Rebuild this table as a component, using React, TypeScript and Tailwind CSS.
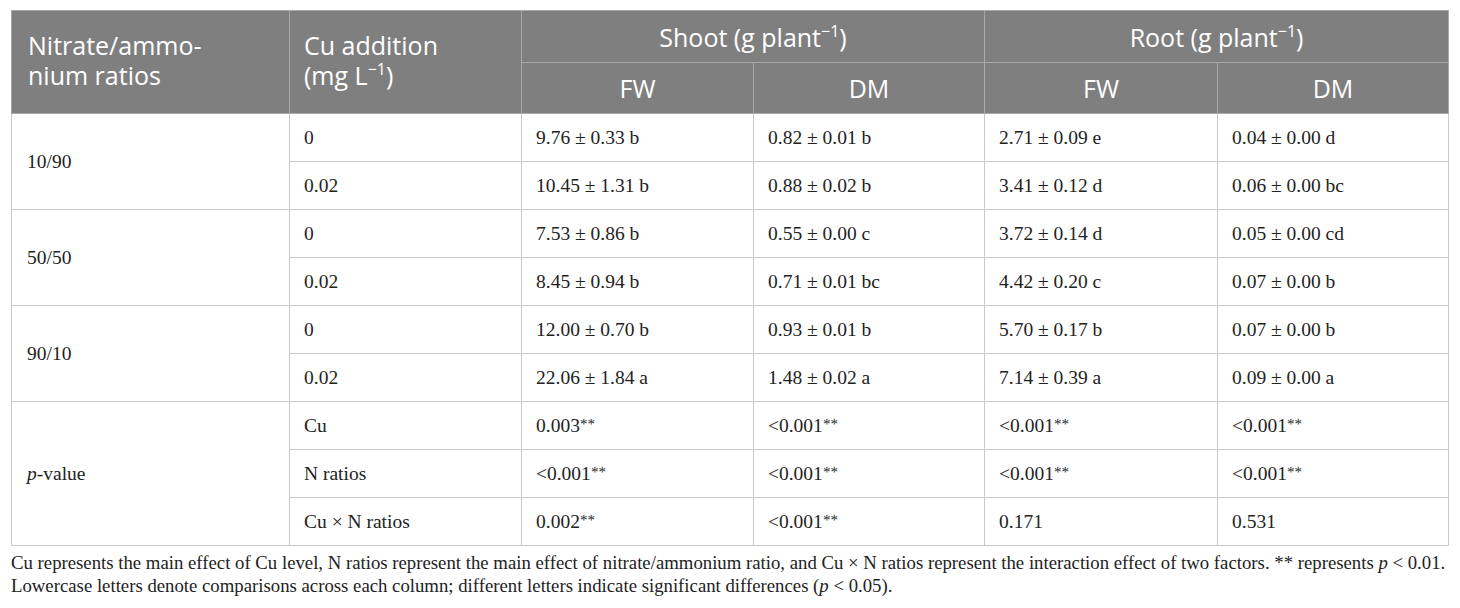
import React from "react";

const serif = "font-['Liberation_Serif','Times_New_Roman',serif]";
const sans = "font-['Open_Sans','Lato',sans-serif]";

type Row = { cu: string; sfw: string; sdm: string; rfw: string; rdm: string };
const groups: { label: React.ReactNode; rows: Row[] }[] = [
  {
    label: "10/90",
    rows: [
      { cu: "0", sfw: "9.76 ± 0.33 b", sdm: "0.82 ± 0.01 b", rfw: "2.71 ± 0.09 e", rdm: "0.04 ± 0.00 d" },
      { cu: "0.02", sfw: "10.45 ± 1.31 b", sdm: "0.88 ± 0.02 b", rfw: "3.41 ± 0.12 d", rdm: "0.06 ± 0.00 bc" },
    ],
  },
  {
    label: "50/50",
    rows: [
      { cu: "0", sfw: "7.53 ± 0.86 b", sdm: "0.55 ± 0.00 c", rfw: "3.72 ± 0.14 d", rdm: "0.05 ± 0.00 cd" },
      { cu: "0.02", sfw: "8.45 ± 0.94 b", sdm: "0.71 ± 0.01 bc", rfw: "4.42 ± 0.20 c", rdm: "0.07 ± 0.00 b" },
    ],
  },
  {
    label: "90/10",
    rows: [
      { cu: "0", sfw: "12.00 ± 0.70 b", sdm: "0.93 ± 0.01 b", rfw: "5.70 ± 0.17 b", rdm: "0.07 ± 0.00 b" },
      { cu: "0.02", sfw: "22.06 ± 1.84 a", sdm: "1.48 ± 0.02 a", rfw: "7.14 ± 0.39 a", rdm: "0.09 ± 0.00 a" },
    ],
  },
  {
    label: (
      <>
        <i>p</i>-value
      </>
    ),
    rows: [
      { cu: "Cu", sfw: "0.003**", sdm: "<0.001**", rfw: "<0.001**", rdm: "<0.001**" },
      { cu: "N ratios", sfw: "<0.001**", sdm: "<0.001**", rfw: "<0.001**", rdm: "<0.001**" },
      { cu: "Cu × N ratios", sfw: "0.002**", sdm: "<0.001**", rfw: "0.171", rdm: "0.531" },
    ],
  },
];

function Val({ v }: { v: string }) {
  const m = v.match(/^(.*?)(\*\*)$/);
  if (m) {
    return (
      <>
        {m[1]}
        <span className="text-[15px] relative top-[-3px]">**</span>
      </>
    );
  }
  return <>{v}</>;
}

const td = "border border-[#c9c9c9] h-[48px] px-[14px] align-middle text-[19.5px] text-[#222]";
const th = "border border-[#a9a9a9] text-white font-normal text-[25px] leading-[30px]";
const sup = "text-[16px] relative top-[-10px] leading-none";

export default function App() {
  return (
    <div className="bg-white w-[1460px] h-[608px] pl-[11px] pt-[10px]">
      <table className={`w-[1437px] border-collapse table-fixed ${serif}`}>
        <colgroup>
          <col className="w-[278px]" />
          <col className="w-[232px]" />
          <col className="w-[232px]" />
          <col className="w-[231px]" />
          <col className="w-[233px]" />
          <col className="w-[231px]" />
        </colgroup>
        <thead className={`bg-[#7f7f7f] ${sans}`}>
          <tr>
            <th rowSpan={2} className={`${th} text-left align-top pt-[19px] px-[16px]`}>
              Nitrate/ammo-
              <br />
              nium ratios
            </th>
            <th rowSpan={2} className={`${th} text-left align-top pt-[19px] px-[14px]`}>
              Cu addition
              <br />
              (mg L<span className={sup}>−1</span>)
            </th>
            <th colSpan={2} className={`${th} h-[52px] text-center`}>
              Shoot (g plant<span className={sup}>−1</span>)
            </th>
            <th colSpan={2} className={`${th} h-[52px] text-center`}>
              Root (g plant<span className={sup}>−1</span>)
            </th>
          </tr>
          <tr>
            <th className={`${th} h-[51px] text-center`}>FW</th>
            <th className={`${th} h-[51px] text-center`}>DM</th>
            <th className={`${th} h-[51px] text-center`}>FW</th>
            <th className={`${th} h-[51px] text-center`}>DM</th>
          </tr>
        </thead>
        <tbody>
          {groups.map((g, gi) =>
            g.rows.map((r, ri) => (
              <tr key={`${gi}-${ri}`}>
                {ri === 0 && (
                  <td rowSpan={g.rows.length} className={`${td} px-[15px]`}>
                    {g.label}
                  </td>
                )}
                <td className={td}>{r.cu}</td>
                <td className={td}>
                  <Val v={r.sfw} />
                </td>
                <td className={td}>
                  <Val v={r.sdm} />
                </td>
                <td className={td}>
                  <Val v={r.rfw} />
                </td>
                <td className={td}>
                  <Val v={r.rdm} />
                </td>
              </tr>
            ))
          )}
        </tbody>
      </table>
      <p className={`${serif} text-[18.75px] leading-[23px] text-[#222] mt-[5px] whitespace-nowrap`}>
        Cu represents the main effect of Cu level, N ratios represent the main effect of nitrate/ammonium ratio, and Cu × N ratios represent the interaction effect of two factors. ** represents <i>p</i> &lt; 0.01.
        <br />
        Lowercase letters denote comparisons across each column; different letters indicate significant differences (<i>p</i> &lt; 0.05).
      </p>
    </div>
  );
}
